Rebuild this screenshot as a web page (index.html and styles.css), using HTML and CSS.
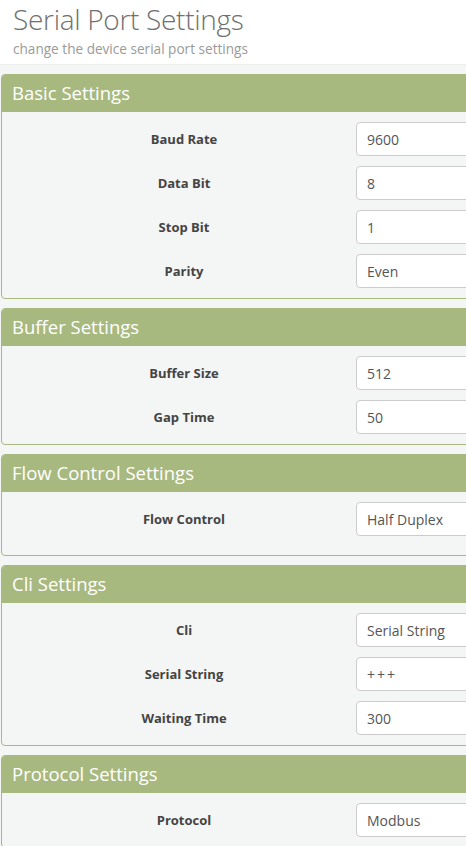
FILE: index.html
```html
<!DOCTYPE html>
<html lang="en">
<head>
<meta charset="utf-8">
<title>Serial Port Settings</title>
<link rel="stylesheet" href="styles.css">
</head>
<body>
<header class="page-header">
  <h1 class="page-title">Serial Port Settings</h1>
  <p class="page-subtitle">change the device serial port settings</p>
</header>
<main class="content">
  <section class="panel">
    <h2 class="panel-heading">Basic Settings</h2>
    <div class="panel-body">
      <div class="form-row"><label class="form-label">Baud Rate</label><input class="form-field" value="9600" readonly></div>
      <div class="form-row"><label class="form-label">Data Bit</label><input class="form-field" value="8" readonly></div>
      <div class="form-row"><label class="form-label">Stop Bit</label><input class="form-field" value="1" readonly></div>
      <div class="form-row"><label class="form-label">Parity</label><input class="form-field" value="Even" readonly></div>
    </div>
  </section>
  <section class="panel">
    <h2 class="panel-heading">Buffer Settings</h2>
    <div class="panel-body">
      <div class="form-row"><label class="form-label">Buffer Size</label><input class="form-field" value="512" readonly></div>
      <div class="form-row"><label class="form-label">Gap Time</label><input class="form-field" value="50" readonly></div>
    </div>
  </section>
  <section class="panel">
    <h2 class="panel-heading">Flow Control Settings</h2>
    <div class="panel-body panel-body-loose">
      <div class="form-row"><label class="form-label">Flow Control</label><input class="form-field" value="Half Duplex" readonly></div>
    </div>
  </section>
  <section class="panel">
    <h2 class="panel-heading">Cli Settings</h2>
    <div class="panel-body">
      <div class="form-row"><label class="form-label">Cli</label><input class="form-field" value="Serial String" readonly></div>
      <div class="form-row"><label class="form-label">Serial String</label><input class="form-field form-field-spaced" value="+++" readonly></div>
      <div class="form-row"><label class="form-label">Waiting Time</label><input class="form-field" value="300" readonly></div>
    </div>
  </section>
  <section class="panel">
    <h2 class="panel-heading">Protocol Settings</h2>
    <div class="panel-body">
      <div class="form-row"><label class="form-label">Protocol</label><input class="form-field" value="Modbus" readonly></div>
    </div>
  </section>
</main>
</body>
</html>
```
FILE: styles.css
```css
html, body {
  overflow-x: hidden;
}
body {
  margin: 0;
  background: #f4f5f5;
  font-family: "Open Sans", "Noto Sans", sans-serif;
  color: #333;
}
.page-header {
  background: #fff;
  height: 65px;
  padding-left: 13px;
  box-sizing: border-box;
  border-bottom: 1px solid #eceeee;
}
.page-title {
  margin: 0;
  font-size: 28px;
  font-weight: 300;
  line-height: 38px;
  color: #707070;
  letter-spacing: -0.3px;
}
.page-subtitle {
  margin: 0;
  font-size: 13.6px;
  line-height: 22px;
  color: #9a9a9a;
}
.content {
  padding-top: 9px;
}
.panel {
  width: 760px;
  margin: 0 0 9px 1px;
  border: 1px solid #a8b980;
  border-radius: 4px;
  background: #f4f5f5;
  overflow: hidden;
}
.panel-heading {
  margin: 0;
  height: 37px;
  background: #a8b980;
  color: #fff;
  font-size: 18.5px;
  font-weight: 400;
  line-height: 36px;
  padding-left: 10px;
}
.panel-body {
  padding: 10px 0 10px 10px;
  display: flex;
  flex-direction: column;
  gap: 10px;
}
.panel-body-loose {
  padding-bottom: 19px;
}
.form-row {
  display: flex;
  align-items: center;
}
.form-label {
  width: 344px;
  text-align: center;
  font-size: 13px;
  font-weight: 700;
  color: #444;
}
.form-field {
  width: 320px;
  height: 34px;
  box-sizing: border-box;
  border: 1px solid #cccccc;
  border-radius: 4px;
  background: #fff;
  padding: 0 10px;
  font-family: "Open Sans", "Noto Sans", sans-serif;
  font-size: 14px;
  color: #555;
  outline: none;
}
.form-field-spaced {
  letter-spacing: 2px;
}
```
